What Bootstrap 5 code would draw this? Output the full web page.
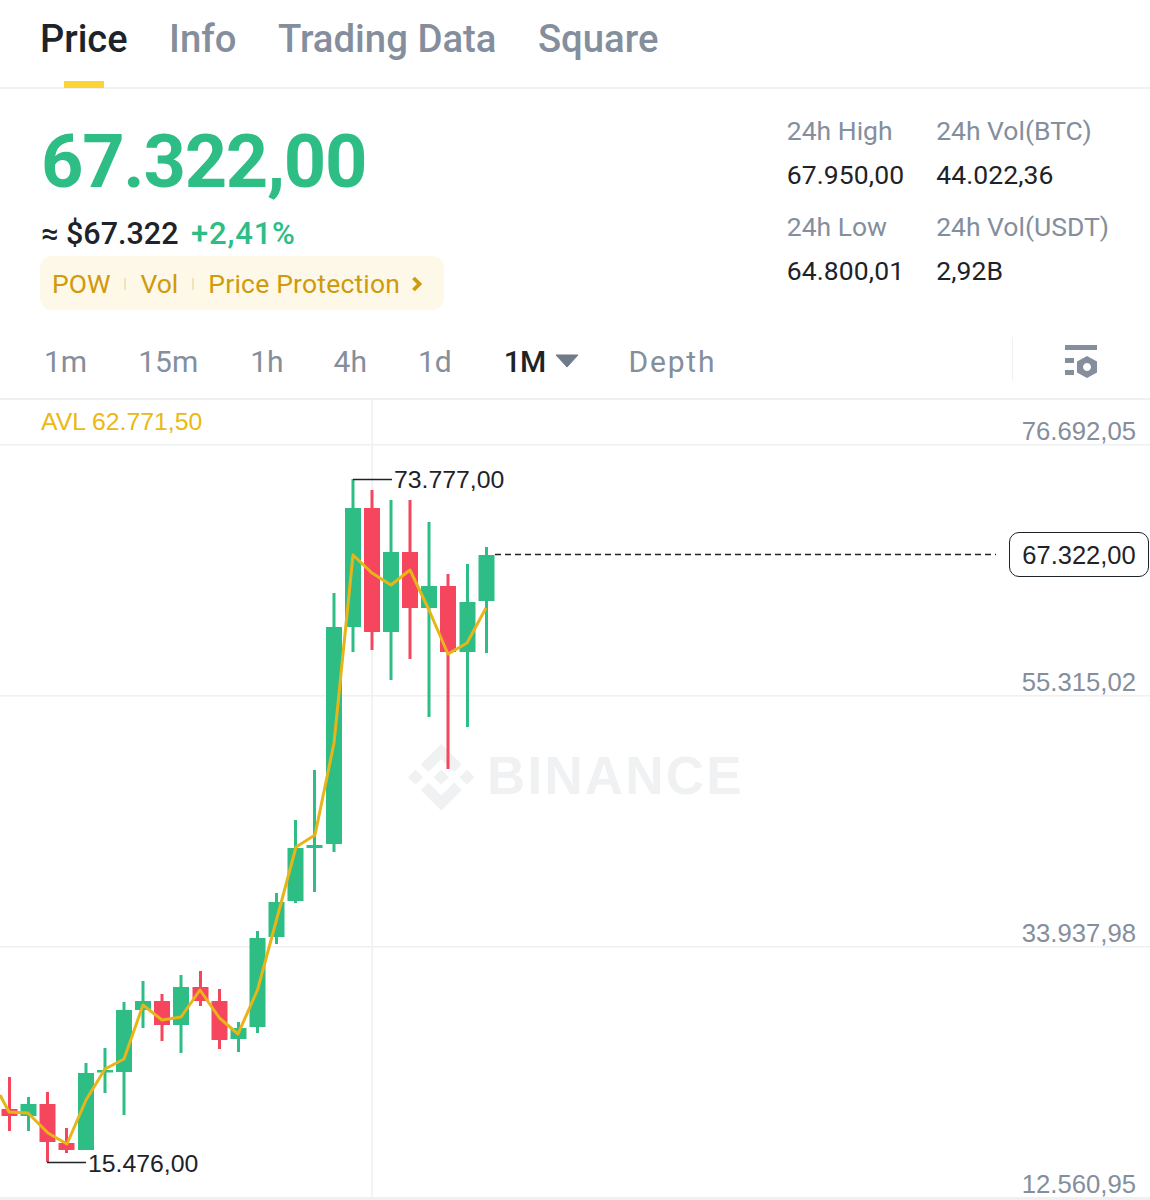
<!DOCTYPE html>
<html lang="en">
<head>
<meta charset="utf-8">
<title>Price</title>
<link href="https://cdn.jsdelivr.net/npm/bootstrap@5.3.0/dist/css/bootstrap.min.css" rel="stylesheet">
<style>
body{background:#fff;font-family:Roboto,sans-serif;color:#1e2329;width:1150px;height:1200px;overflow:hidden}
.tabbar{height:89px;border-bottom:2px solid #f0f1f2;padding-left:40px;gap:41.5px}
.tabitem{position:relative;font-size:38.3px;font-weight:500;line-height:78px;color:#848e9c;text-decoration:none}
.tabitem.on{color:#1e2329;font-size:38px}
.tabitem.on::after{content:"";position:absolute;left:24px;width:40px;height:7px;top:81px;background:#fcd535}
.summary{height:243px;padding:0 41px 0 41px}
.bigprice{font-size:74px;font-weight:700;line-height:74px;color:#2ebd85;margin-top:36px;letter-spacing:-1.3px}
.fiat{font-size:30.5px;font-weight:500;line-height:36px;margin-top:17px}
.fiat .chg{color:#2ebd85;font-size:31px;font-weight:500;margin-left:5px;letter-spacing:.8px}
.tagbox{width:404px;height:54px;margin-left:-1px;margin-top:4px;padding:1px 0 0 12px;background:#fef8e8;border-radius:12px;color:#cf9a0b;font-size:26.5px}
.tagbox i{display:block;width:2px;height:12px;background:#f2e4b8;margin:0 14px}
.tagprot{letter-spacing:.2px}
.tagchev{margin-left:11px}
.statcols{gap:32px;margin-top:24px}
.statlabel{color:#848e9c;font-size:26.5px;line-height:36px}
.statval{font-size:26.5px;line-height:36px;margin-top:8px;margin-bottom:16px;letter-spacing:.1px}
.ranges{height:68px;border-bottom:2px solid #eff0f2;padding:0 0 8px 44px;color:#848e9c;font-size:30px}
.ranges span{display:block}
.ranges .sel{color:#1e2329;font-weight:500;letter-spacing:-.8px;margin-left:52px}
.sepa{margin-left:51px}
.sepa2{margin-left:52px}
.sepb{margin-left:50px}
.sepc{margin-left:51px}
.depth{margin-left:49px;letter-spacing:1.8px}
.caret{margin-left:10px}
.settings{width:138px;height:44px;border-left:1px solid #eff0f2;padding-left:51px;margin-bottom:4px}
.settings svg{margin-top:5px}
.plot{position:relative;height:800px}
.plot svg{position:absolute;left:0;top:0}
.axis{position:absolute;font-family:"Liberation Sans",sans-serif;font-size:25.7px;line-height:30px;color:#848e9c;right:14px}
.peak{position:absolute;font-family:"Liberation Sans",sans-serif;font-size:24.8px;line-height:30px;color:#1e2329}
.peak-hi{left:394px;top:65px}
.peak-lo{left:88px;top:749px}
.axis-a{top:16px}.axis-b{top:267px}.axis-c{top:518px}.axis-d{top:769px}
.avl{position:absolute;left:41px;top:7px;font-family:"Liberation Sans",sans-serif;font-size:24.8px;line-height:30px;color:#ecb80f}
.nowprice{position:absolute;left:1009px;top:132px;width:140px;height:45px;padding-top:1px;border:1px solid #1e2329;border-radius:10px;font-family:"Liberation Sans",sans-serif;font-size:25.5px;color:#1e2329;background:#fff}
.wm{position:absolute;left:487px;top:346px;font-family:"Liberation Sans",sans-serif;font-weight:700;font-size:53px;line-height:60px;letter-spacing:2.2px;color:#f0f1f2}
</style>
</head>
<body>
<nav class="nav tabbar flex-nowrap">
  <a class="tabitem on" href="#">Price</a>
  <a class="tabitem" href="#">Info</a>
  <a class="tabitem" href="#">Trading Data</a>
  <a class="tabitem" href="#">Square</a>
</nav>
<section class="summary d-flex justify-content-between">
  <div>
    <div class="bigprice">67.322,00</div>
    <div class="fiat">≈ $67.322 <span class="chg">+2,41%</span></div>
    <div class="tagbox d-flex align-items-center">
      <span>POW</span><i></i><span>Vol</span><i></i><span class="tagprot">Price Protection</span>
      <svg class="tagchev" width="12" height="18" viewBox="0 0 12 18"><path d="M2.5 3l6 6-6 6" fill="none" stroke="#cf9a0b" stroke-width="3.8"/></svg>
    </div>
  </div>
  <div class="statcols d-flex">
    <div>
      <div class="statlabel">24h High</div><div class="statval">67.950,00</div>
      <div class="statlabel">24h Low</div><div class="statval">64.800,01</div>
    </div>
    <div>
      <div class="statlabel">24h Vol(BTC)</div><div class="statval">44.022,36</div>
      <div class="statlabel">24h Vol(USDT)</div><div class="statval">2,92B</div>
    </div>
  </div>
</section>
<div class="ranges d-flex align-items-center">
  <span>1m</span><span class="sepa">15m</span><span class="sepa2">1h</span><span class="sepb">4h</span><span class="sepc">1d</span>
  <span class="sel">1M</span>
  <svg class="caret" width="24" height="14" viewBox="0 0 24 14"><path d="M1 1h22L12 13z" fill="#6f7a8a" stroke="#6f7a8a" stroke-linejoin="round"/></svg>
  <span class="depth">Depth</span>
  <div class="settings ms-auto d-flex align-items-center">
    <svg width="34" height="34" viewBox="0 0 34 34"><path fill="#848e9c" fill-rule="evenodd" d="M1 0h32v5H1zM1 13h9v5H1zM1 25h9v5H1zM23 11l10 5.500v11L23 33l-10-5.500v-11zM23 18a4 4 0 1 0 .01 0z"/></svg>
  </div>
</div>
<div class="plot">
  <svg width="1150" height="800" viewBox="0 400 1150 800">
    <g fill="#eff0f2">
      <rect x="0" y="444" width="1150" height="1.5"/><rect x="0" y="695" width="1150" height="1.5"/><rect x="0" y="946" width="1150" height="1.5"/><rect x="0" y="1197" width="1150" height="3"/><rect x="371.5" y="400" width="1.5" height="800"/>
    </g>
    <path fill="#f0f1f2" transform="translate(408 744) scale(.525)" d="M38.73 53.2l24.59-24.58 24.6 24.6 14.3-14.31L63.32 0 24.42 38.9zM0 63.31l14.3-14.31 14.31 14.31-14.31 14.3zM38.73 73.41l24.59 24.59 24.6-24.6 14.31 14.29L63.32 126.61 24.42 87.71zM97.99 63.31l14.3-14.31 14.31 14.31-14.31 14.3zM77.83 63.3L63.32 48.78 52.59 59.51l-1.24 1.23-2.54 2.54 14.51 14.52 14.51-14.51z"/>
    <g fill="#f6465d">
      <rect x="8" y="1077" width="3" height="54"/><rect x="1.5" y="1109" width="16" height="7"/>
      <rect x="46" y="1092" width="3" height="70"/><rect x="39.5" y="1104" width="16" height="38"/>
      <rect x="65" y="1128" width="3" height="25"/><rect x="58.5" y="1143" width="16" height="7"/>
      <rect x="160.500" y="994" width="3" height="47"/><rect x="154" y="1001" width="16" height="24"/>
      <rect x="199" y="971" width="3" height="35"/><rect x="192.500" y="987" width="16" height="14"/>
      <rect x="218" y="989" width="3" height="60"/><rect x="211.500" y="1001" width="16" height="39"/>
      <rect x="370.500" y="490" width="3" height="160"/><rect x="364" y="508" width="16" height="124"/>
      <rect x="408.500" y="500" width="3" height="159"/><rect x="402" y="552" width="16" height="56"/>
      <rect x="446.500" y="574" width="3" height="195"/><rect x="440" y="586" width="16" height="66"/>
    </g>
    <g fill="#2ebd85">
      <rect x="27" y="1097" width="3" height="34"/><rect x="20.500" y="1104" width="16" height="12"/>
      <rect x="84.500" y="1063" width="3" height="87"/><rect x="78" y="1073" width="16" height="77"/>
      <rect x="103.500" y="1048" width="3" height="45"/><rect x="97" y="1070" width="16" height="2.500"/>
      <rect x="122.500" y="1002" width="3" height="113"/><rect x="116" y="1010" width="16" height="62"/>
      <rect x="141.500" y="981" width="3" height="47"/><rect x="135" y="1001" width="16" height="9"/>
      <rect x="179.500" y="975" width="3" height="78"/><rect x="173" y="987" width="16" height="38"/>
      <rect x="237" y="1022" width="3" height="30"/><rect x="230.500" y="1028" width="16" height="11"/>
      <rect x="256" y="931" width="3" height="102"/><rect x="249.500" y="938" width="16" height="89"/>
      <rect x="275" y="893" width="3" height="51"/><rect x="268.500" y="902" width="16" height="35"/>
      <rect x="294" y="820" width="3" height="83"/><rect x="287.500" y="848" width="16" height="53"/>
      <rect x="313" y="770" width="3" height="122"/><rect x="306.500" y="845" width="16" height="3"/>
      <rect x="332.500" y="593" width="3" height="259"/><rect x="326" y="627" width="16" height="217"/>
      <rect x="351.500" y="479" width="3" height="173"/><rect x="345" y="508" width="16" height="119"/>
      <rect x="389.500" y="500" width="3" height="180"/><rect x="383" y="552" width="16" height="80"/>
      <rect x="427.500" y="522" width="3" height="195"/><rect x="421" y="586" width="16" height="22"/>
      <rect x="466" y="564" width="3" height="163"/><rect x="459.500" y="602" width="16" height="50"/>
      <rect x="485" y="547" width="3" height="106"/><rect x="478.500" y="555" width="16" height="46"/>
    </g>
    <polyline fill="none" stroke="#e8b518" stroke-width="3" stroke-linejoin="round" points="0,1095 9,1112 28,1113 48,1133 67,1144 86,1100 105,1069 124,1059 143,1005 162,1020 181,1017 200,990 219.500,1018 238,1034 257.500,990 277,918 296,847 315,835 334,743 353,555 372,573 391,585 410,570 429,610 448,654 467,643 486,608"/>
    <path fill="none" stroke="#1e2329" stroke-width="1.500" d="M353 479.500H392M47 1162.500H86"/>
    <path fill="none" stroke="#1e2329" stroke-width="1.500" stroke-dasharray="6 4" d="M495 554.500H996"/>
  </svg>
  <div class="wm">BINANCE</div>
  <div class="avl">AVL 62.771,50</div>
  <div class="axis axis-a">76.692,05</div>
  <div class="axis axis-b">55.315,02</div>
  <div class="axis axis-c">33.937,98</div>
  <div class="axis axis-d">12.560,95</div>
  <div class="peak peak-hi">73.777,00</div>
  <div class="peak peak-lo">15.476,00</div>
  <div class="nowprice d-flex align-items-center justify-content-center">67.322,00</div>
</div>
</body>
</html>
